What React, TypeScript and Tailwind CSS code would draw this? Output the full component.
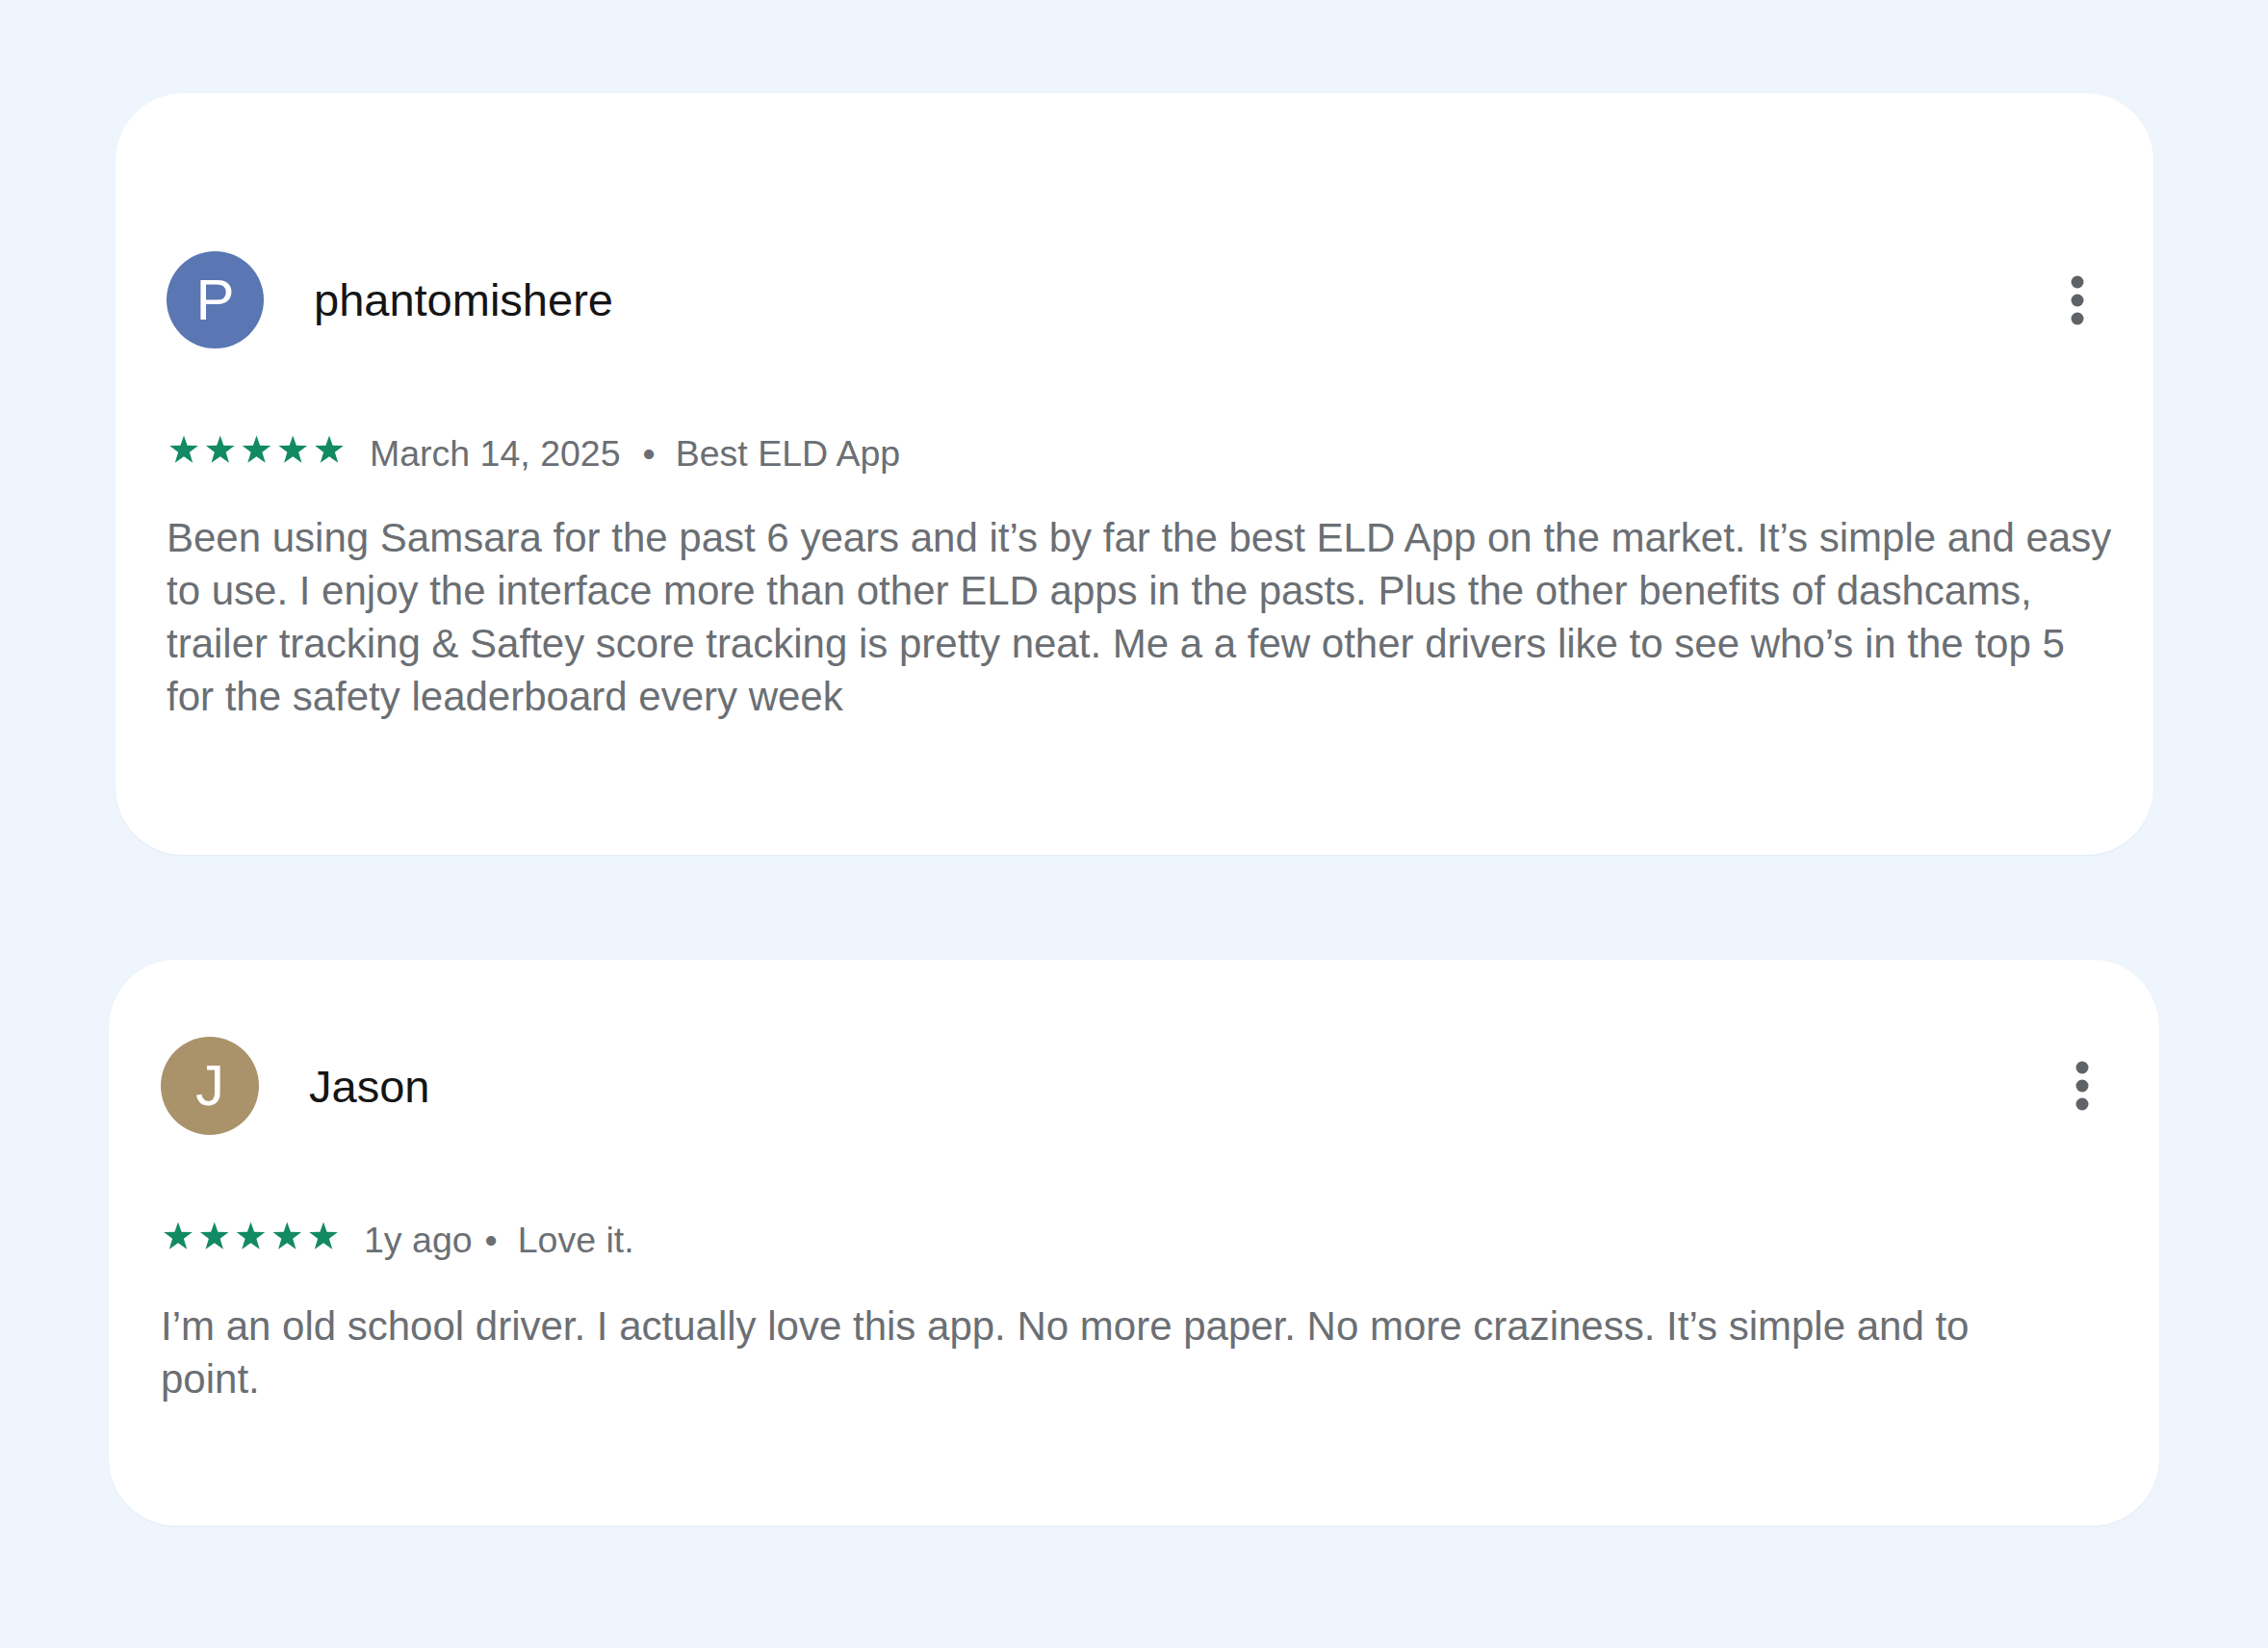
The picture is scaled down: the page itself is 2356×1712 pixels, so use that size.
import React from "react";

const Stars = () => (
    <svg width="182" height="29" viewBox="0 0 182 29" className="shrink-0 mb-[12px] ml-[3px]">
        {[0, 1, 2, 3, 4].map((i) => (
            <polygon
                key={i}
                transform={`translate(${i * 37.75} 0.5)`}
                fill="#128a63"
                points="15,0 18.6,10.3 29.8,10.5 20.9,17.3 24.2,28.2 15,21.8 5.8,28.2 9.1,17.3 0.2,10.5 11.4,10.3"
            />
        ))}
    </svg>
);

const Kebab = () => (
    <svg width="14" height="52" viewBox="0 0 14 52" className="shrink-0">
        <circle cx="7" cy="7" r="6.5" fill="#5f6368" />
        <circle cx="7" cy="26" r="6.5" fill="#5f6368" />
        <circle cx="7" cy="45" r="6.5" fill="#5f6368" />
    </svg>
);

export default function App() {
    return (
        <div className="min-h-[1712px] w-full bg-[#eef5fd] font-['Liberation_Sans',Arial,sans-serif] pt-[97px]">
            {/* first review */}
            <div className="ml-[120px] w-[2117px] h-[791px] bg-white rounded-[70px] pt-[164px] pl-[53px] pr-[72px] shadow-[0_1px_2px_rgba(30,60,110,0.06)]">
                <div className="flex items-center">
                    <div className="w-[101px] h-[101px] rounded-full bg-[#5a76b3] flex items-center justify-center text-white text-[60px] leading-none">
                        P
                    </div>
                    <div className="ml-[52px] text-[47px] text-[#151515] leading-none">phantomishere</div>
                    <div className="flex-1" />
                    <Kebab />
                </div>
                <div className="flex items-center h-[50px] mt-[85px] text-[37.5px] text-[#6b6f74] leading-none">
                    <Stars />
                    <span className="ml-[26px]">March 14, 2025</span>
                    <span className="ml-[23px] mr-[21px]">•</span>
                    <span>Best ELD App</span>
                </div>
                <p className="mt-[34px] w-[2032px] text-[42px] leading-[55px] text-[#6b6f74]">
                    Been using Samsara for the past 6 years and it’s by far the best ELD App on the market. It’s simple and easy to use. I enjoy the interface more than other ELD apps in the pasts. Plus the other benefits of dashcams, trailer tracking &amp; Saftey score tracking is pretty neat. Me a a few other drivers like to see who’s in the top 5 for the safety leaderboard every week
                </p>
            </div>

            {/* second review */}
            <div className="ml-[113px] mt-[109px] w-[2130px] h-[588px] bg-white rounded-[70px] pt-[80px] pl-[54px] pr-[73px] shadow-[0_1px_2px_rgba(30,60,110,0.06)]">
                <div className="flex items-center">
                    <div className="w-[102px] h-[102px] rounded-full bg-[#aa926a] flex items-center justify-center text-white text-[60px] leading-none">
                        J
                    </div>
                    <div className="ml-[52px] text-[47px] text-[#151515] leading-none">Jason</div>
                    <div className="flex-1" />
                    <Kebab />
                </div>
                <div className="flex items-center h-[50px] mt-[85px] text-[37.5px] text-[#6b6f74] leading-none">
                    <Stars />
                    <span className="ml-[26px]">1y ago</span>
                    <span className="ml-[13px] mr-[21px]">•</span>
                    <span>Love it.</span>
                </div>
                <p className="mt-[36px] w-[1960px] text-[42px] leading-[55px] text-[#6b6f74]">
                    I’m an old school driver. I actually love this app. No more paper. No more craziness. It’s simple and to point.
                </p>
            </div>
        </div>
    );
}
